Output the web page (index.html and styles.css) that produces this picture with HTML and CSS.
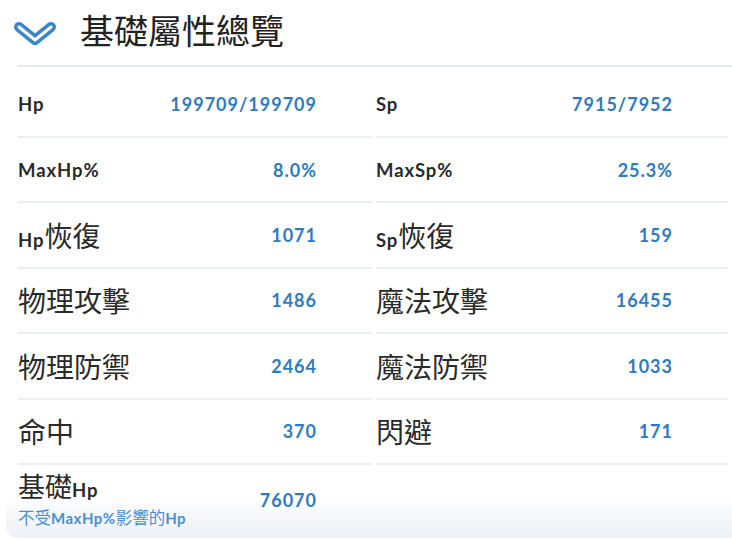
FILE: index.html
```html
<!DOCTYPE html>
<html lang="zh-Hant">
<head>
<meta charset="utf-8">
<link rel="stylesheet" href="styles.css">
</head>
<body>
<div class="card">
  <div class="header">
    <svg class="chev" width="46" height="32" viewBox="0 0 46 32">
      <path d="M7 8 L23 21 L39 8" fill="none" stroke="#3a86c8" stroke-width="10" stroke-linecap="round" stroke-linejoin="round"/>
      <path d="M7 8 L23 21 L39 8" fill="none" stroke="#ffffff" stroke-width="3" stroke-linecap="round" stroke-linejoin="round"/>
    </svg>
    <h1 class="title">基礎屬性總覽</h1>
  </div>
  <div class="grid">
    <div class="cell first"><span class="lab">Hp</span><span class="val">199709/199709</span></div>
    <div class="cell first"><span class="lab">Sp</span><span class="val">7915/7952</span></div>
    <div class="cell"><span class="lab">MaxHp%</span><span class="val">8.0%</span></div>
    <div class="cell"><span class="lab">MaxSp%</span><span class="val">25.3%</span></div>
    <div class="cell"><span class="lab">Hp<span class="cjk">恢復</span></span><span class="val">1071</span></div>
    <div class="cell"><span class="lab">Sp<span class="cjk">恢復</span></span><span class="val">159</span></div>
    <div class="cell"><span class="lab"><span class="cjk">物理攻擊</span></span><span class="val">1486</span></div>
    <div class="cell"><span class="lab"><span class="cjk">魔法攻擊</span></span><span class="val">16455</span></div>
    <div class="cell"><span class="lab"><span class="cjk">物理防禦</span></span><span class="val">2464</span></div>
    <div class="cell"><span class="lab"><span class="cjk">魔法防禦</span></span><span class="val">1033</span></div>
    <div class="cell"><span class="lab"><span class="cjk">命中</span></span><span class="val">370</span></div>
    <div class="cell"><span class="lab"><span class="cjk">閃避</span></span><span class="val">171</span></div>
    <div class="cell last">
      <div class="labwrap">
        <span class="lab top"><span class="cjk">基礎</span>Hp</span>
        <span class="sub">不受<b>MaxHp%</b>影響的<b>Hp</b></span>
      </div>
      <span class="val">76070</span>
    </div>
  </div>
</div>
</body>
</html>
```
FILE: styles.css
```css
html, body {
  margin: 0;
  padding: 0;
  background: #ffffff;
}
body {
  width: 732px;
  height: 540px;
  overflow: hidden;
  font-family: "Lato", "Noto Sans CJK TC", sans-serif;
  color: #2b2b2b;
}
.card {
  margin-left: 6px;
  padding-left: 12px;
  height: 538px;
  box-sizing: border-box;
  background: linear-gradient(to bottom, #ffffff 0, #ffffff 494px, #edf0f5 538px);
  border-bottom-left-radius: 12px;
}
.header {
  display: flex;
  align-items: center;
  height: 67px;
  border-bottom: 2px solid #e8ebf2;
  box-sizing: border-box;
}
.chev {
  margin-left: -6px;
  margin-top: 4px;
}
.title {
  margin: 0 0 0 22px;
  font-family: "Noto Sans CJK TC", sans-serif;
  font-weight: 400;
  font-size: 34px;
  line-height: 1;
  color: #222;
  position: relative;
  top: -3px;
}
.grid {
  display: grid;
  grid-template-columns: 358px 1fr;
}
.cell {
  display: flex;
  align-items: center;
  justify-content: space-between;
  height: 65.4px;
  box-sizing: border-box;
  border-bottom: 2px solid #eceef5;
  padding-right: 55px;
  margin-right: 4px;
}
.cell.first {
  height: 71px;
  padding-top: 5px;
}
.lab {
  font-family: "Lato", sans-serif;
  font-weight: 700;
  font-size: 18.5px;
  letter-spacing: 0.9px;
  color: #2a2a2a;
  display: flex;
  align-items: baseline;
}
.cjk {
  font-family: "Noto Sans CJK TC", sans-serif;
  font-weight: 400;
  font-size: 28px;
  letter-spacing: 0;
  color: #2a2a2a;
}
.val {
  font-family: "Lato", sans-serif;
  font-weight: 700;
  font-size: 18px;
  letter-spacing: 1px;
  color: #2f7bbd;
}
.cell.last {
  border-bottom: none;
  height: 72px;
  align-items: flex-start;
}
.cell.last .val {
  margin-top: 24px;
}
.labwrap {
  display: flex;
  flex-direction: column;
  margin-top: 1px;
}
.lab.top {
  line-height: normal;
}
.lab.top .cjk {
  font-size: 27px;
  line-height: normal;
}
.sub {
  font-family: "Noto Sans CJK TC", sans-serif;
  font-size: 16.5px;
  color: #4a8fd3;
  line-height: normal;
}
.sub b {
  font-family: "Lato", sans-serif;
  font-weight: 700;
  font-size: 15px;
  letter-spacing: 0.5px;
}
```
